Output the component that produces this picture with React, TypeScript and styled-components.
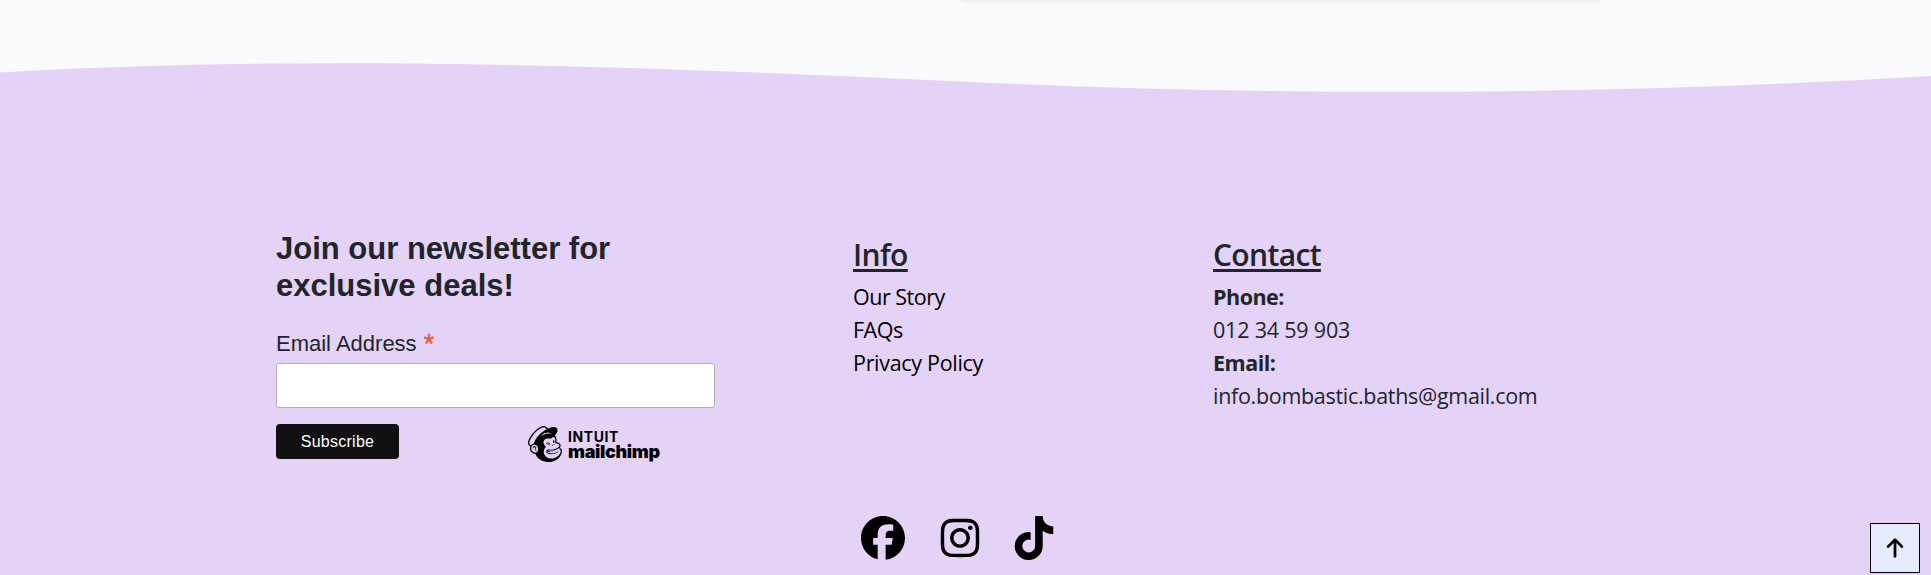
import React from "react";
import styled, { createGlobalStyle } from "styled-components";
import { FaFacebook, FaInstagram, FaTiktok, FaArrowUp } from "react-icons/fa6";
import { SiMailchimp } from "react-icons/si";

const GlobalStyle = createGlobalStyle`
  *, *::before, *::after { box-sizing: border-box; }
  body { margin: 0; background: #f8fafc; overflow: hidden; }
`;

const Page = styled.div`
  height: 575px;
  overflow: hidden;
  font-family: "Open Sans", "Noto Sans", sans-serif;
  font-size: 21.5px;
  line-height: 33px;
  color: #212529;
`;

const CardEdge = styled.div`
  width: 644px;
  height: 20px;
  margin: -20px 0 0 959px;
  background: #fff;
  border-radius: 6px;
  box-shadow: 0 2px 4px rgba(0, 0, 0, 0.06);
`;

const Wave = styled.svg`
  display: block;
  width: 100%;
  height: 100px;
`;

const Footer = styled.footer`
  height: 475px;
  background: #e4d2f7;
`;

const Columns = styled.div`
  display: grid;
  grid-template-columns: 577px 360px 400px;
  height: 416px;
  padding: 130px 0 0 276px;
`;

const Form = styled.form`
  width: 439px;
  font-family: "Liberation Sans", Arial, sans-serif;
`;

const FormTitle = styled.h2`
  margin: 0;
  font-size: 31px;
  line-height: 37px;
  font-weight: 700;
`;

const Label = styled.label`
  display: flex;
  gap: 7px;
  height: 37px;
  margin-top: 22px;
  font-size: 22px;
  line-height: 36px;
`;

const Asterisk = styled.span`
  font-size: 27px;
  line-height: 36px;
  -webkit-text-stroke: 0.5px #e85c41;
  color: #e85c41;
`;

const EmailInput = styled.input`
  display: block;
  width: 100%;
  height: 45px;
  border: 1px solid #abb0b2;
  border-radius: 3px;
  background: #fff;
`;

const FormActions = styled.div`
  display: flex;
  align-items: flex-start;
  margin-top: 16px;
`;

const SubscribeButton = styled.button`
  width: 123px;
  height: 35px;
  padding: 0;
  border: 0;
  border-radius: 4px;
  background: #111;
  color: #fff;
  font: 16px "Liberation Sans", Arial, sans-serif;
  letter-spacing: 0.25px;
`;

const Badge = styled.div`
  display: flex;
  gap: 5px;
  margin: 2px 0 0 128px;
  color: #000;
`;

const BadgeText = styled.div`
  display: flex;
  flex-direction: column;
  padding-top: 4px;
`;

const Intuit = styled.span`
  font: 700 14px/13px Inter, sans-serif;
  letter-spacing: 0.6px;
`;

const Mailchimp = styled.span`
  font: 900 18px/17px Inter, sans-serif;
  letter-spacing: -0.35px;
`;

const Column = styled.div`
  padding-top: 6px;
`;

const ColumnTitle = styled.h3`
  margin: 0 0 6px;
  font-size: 30px;
  line-height: 38px;
  font-weight: 600;
  letter-spacing: -0.65px;
  text-decoration: underline;
  text-decoration-thickness: 3px;
  text-underline-offset: 3px;
`;

const List = styled.ul`
  margin: 0;
  padding: 0;
  list-style: none;
`;

const Item = styled.li<{ $bold?: boolean; $black?: boolean; $tracking?: number }>`
  font-weight: ${(p) => (p.$bold ? 700 : 400)};
  color: ${(p) => (p.$black ? "#000" : "inherit")};
  letter-spacing: ${(p) => p.$tracking ?? -0.3}px;
`;

const Socials = styled.div`
  display: flex;
  gap: 35.5px;
  padding-left: 861px;
  font-size: 44px;
  color: #000;
`;

const SocialLink = styled.a<{ $width: number }>`
  display: flex;
  justify-content: center;
  width: ${(p) => p.$width}px;
  height: 44px;

  svg {
    flex: none;
  }
`;

const BackToTop = styled.button`
  position: fixed;
  right: 11px;
  bottom: 2px;
  display: flex;
  align-items: center;
  justify-content: center;
  width: 50px;
  height: 50px;
  padding: 0;
  border: 1px solid #000;
  background: #e6ebfd;
  color: #000;
  font-size: 22px;
`;

export default function App() {
  return (
    <Page>
      <GlobalStyle />
      <CardEdge />
      <Wave viewBox="0 0 1931 100" preserveAspectRatio="none">
        <path
          fill="#e4d2f7"
          d="M0 72.4C320 54 643 66.6 965 81.7C1287 96.8 1609 95.2 1931 76V100H0Z"
        />
      </Wave>
      <Footer>
        <Columns>
          <Form>
            <FormTitle>
              Join our newsletter for
              <br />
              exclusive deals!
            </FormTitle>
            <Label htmlFor="email">
              <span>Email Address</span>
              <Asterisk>*</Asterisk>
            </Label>
            <EmailInput id="email" type="email" />
            <FormActions>
              <SubscribeButton type="button">Subscribe</SubscribeButton>
              <Badge>
                <SiMailchimp size={36} />
                <BadgeText>
                  <Intuit>INTUIT</Intuit>
                  <Mailchimp>mailchimp</Mailchimp>
                </BadgeText>
              </Badge>
            </FormActions>
          </Form>
          <Column>
            <ColumnTitle>Info</ColumnTitle>
            <List>
              <Item $black $tracking={-0.5}>Our Story</Item>
              <Item $black $tracking={-0.5}>FAQs</Item>
              <Item $black>Privacy Policy</Item>
            </List>
          </Column>
          <Column>
            <ColumnTitle>Contact</ColumnTitle>
            <List>
              <Item $bold $tracking={-0.5}>Phone:</Item>
              <Item $tracking={-0.2}>012 34 59 903</Item>
              <Item $bold $tracking={-0.5}>Email:</Item>
              <Item>info.bombastic.baths@gmail.com</Item>
            </List>
          </Column>
        </Columns>
        <Socials>
          <SocialLink $width={44} aria-label="Facebook"><FaFacebook /></SocialLink>
          <SocialLink $width={38.5} aria-label="Instagram"><FaInstagram /></SocialLink>
          <SocialLink $width={38.5} aria-label="TikTok"><FaTiktok /></SocialLink>
        </Socials>
      </Footer>
      <BackToTop aria-label="Back to top">
        <FaArrowUp />
      </BackToTop>
    </Page>
  );
}
